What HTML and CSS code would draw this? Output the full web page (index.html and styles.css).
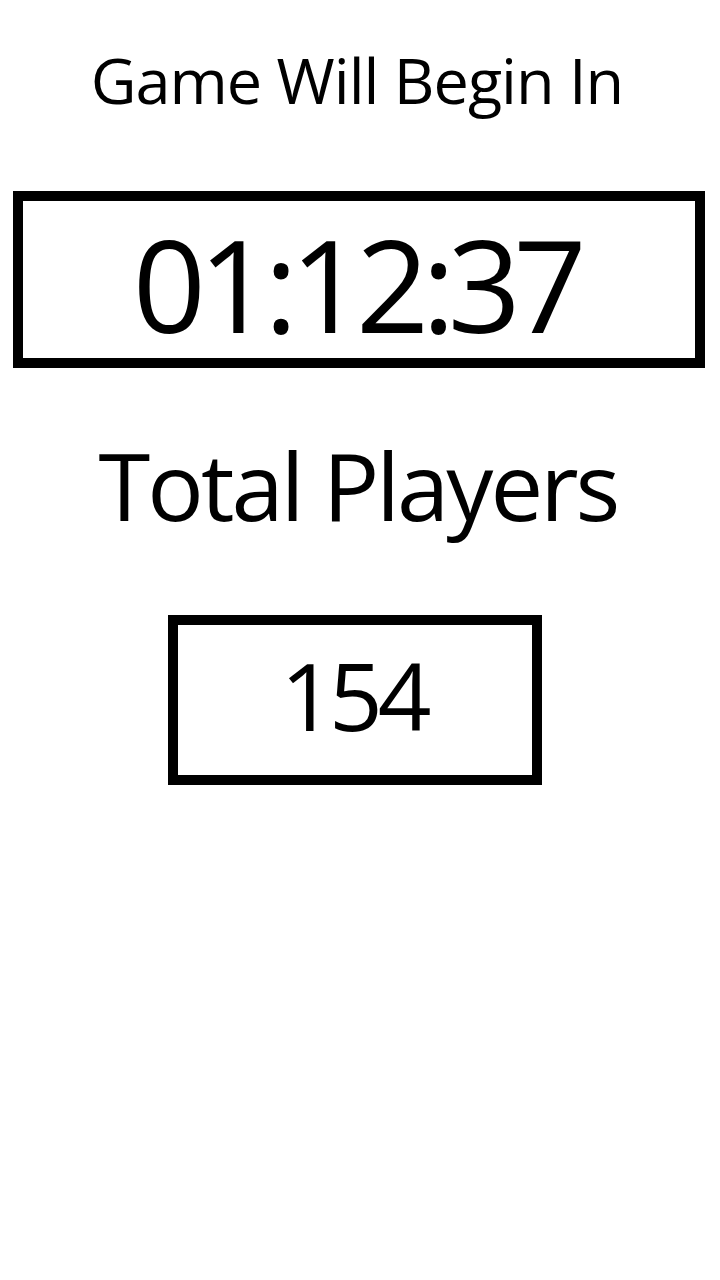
FILE: index.html
```html
<!DOCTYPE html>
<html>
<head>
<meta charset="utf-8">
<link rel="stylesheet" href="styles.css">
</head>
<body>
<main class="screen">
  <h1 class="title">Game Will Begin In</h1>
  <div class="timer-box"><span class="timer">01:12:37</span></div>
  <h2 class="label">Total Players</h2>
  <div class="count-box"><span class="count">154</span></div>
</main>
</body>
</html>
```
FILE: styles.css
```css
html, body {
  margin: 0;
  padding: 0;
  background: #fff;
}
.screen {
  width: 720px;
  height: 1280px;
  display: flex;
  flex-direction: column;
  align-items: center;
  font-family: "Open Sans", "Noto Sans", sans-serif;
  color: #000;
}
.title {
  margin: 40px 6px 0 0;
  font-size: 63px;
  font-weight: 400;
  line-height: 80px;
  letter-spacing: -1px;
}
.timer-box {
  margin: 71px 2px 0 0;
  width: 672px;
  height: 149px;
  padding-top: 8px;
  border: 10px solid #000;
  display: flex;
  align-items: center;
  justify-content: center;
}
.timer {
  font-size: 128px;
  line-height: 1;
  letter-spacing: -7.5px;
  margin-right: 6px;
}
.label {
  margin: 62px 4px 0 0;
  font-size: 94px;
  font-weight: 400;
  line-height: 110px;
  letter-spacing: -3px;
}
.count-box {
  margin: 75px 10px 0 0;
  width: 354px;
  height: 140px;
  padding-bottom: 10px;
  border: 10px solid #000;
  display: flex;
  align-items: center;
  justify-content: center;
}
.count {
  font-size: 94px;
  line-height: 1;
  letter-spacing: -5px;
  margin-right: 3px;
}
```
